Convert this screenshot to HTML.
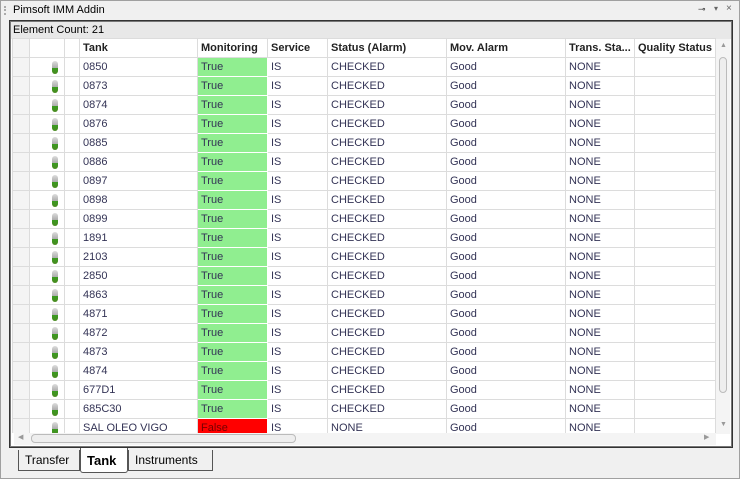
<!DOCTYPE html>
<html><head><style>
*{margin:0;padding:0;box-sizing:border-box}
body{width:740px;height:479px;background:#f0f0f0;font-family:"Liberation Sans",sans-serif;font-size:11px;position:relative;overflow:hidden;color:#000}
.win{position:absolute;left:0;top:0;width:740px;height:479px;border:1px solid #a0a0a0;background:#f0f0f0}
.title{position:absolute;left:12px;top:3px;font-size:11px}
.grip{position:absolute;left:3px;top:5px;width:2px;height:9px;border-left:2px dotted #aaa}
.frame{position:absolute;left:8px;top:19px;width:724px;height:428px;border:1px solid #333;box-shadow:inset 0 0 0 1px #777;background:#fff}
.ec{position:absolute;left:1px;top:1px;width:720px;height:17px;background:#e8e8e8;padding:2px 2px;font-size:11px}
.grid{position:absolute;left:2px;top:17px;width:704px;height:395px;overflow:hidden}
table{border-collapse:collapse;table-layout:fixed}
td,th{height:19px;border:1px solid #dcdcdc;padding:0 3px;white-space:nowrap;overflow:hidden;text-align:left;color:#333355}
th{font-weight:bold;color:#222;background:#fff}
td.rh,th.rh{background:#f4f4f4}
.g{background:#90ee90;border-color:#fff}
.r{background:#ff0000;color:#700;border-color:#fff}
.ic{display:inline-block;width:6px;height:13px;border-radius:3px;background:linear-gradient(#ddd 0,#aaa 55%,#3a9a20 55%,#4a8a20);margin-left:19px;vertical-align:middle}
.vs{position:absolute;left:706px;top:18px;width:14px;height:395px;background:#f4f4f4}
.vs .th{position:absolute;left:3px;top:18px;width:8px;height:336px;border:1px solid #bbb;border-radius:4px;background:#eee}
.hs{position:absolute;left:4px;top:412px;width:702px;height:12px;background:#f4f4f4}
.hs .th{position:absolute;left:17px;top:1px;width:265px;height:9px;border:1px solid #bbb;border-radius:4px;background:#eee}
.tab{position:absolute;top:449px;height:21px;border:1px solid #555;border-top:none;background:#f0f0f0;padding:3px 6px;font-size:12px}
</style></head><body>
<div class="win">
<div class="grip"></div><div class="title">Pimsoft IMM Addin</div>
<div style="position:absolute;left:697px;top:3px;font-size:9px;color:#333">⊸</div>
<div style="position:absolute;left:713px;top:3px;font-size:8px;color:#666">▾</div>
<div style="position:absolute;left:725px;top:2px;font-size:10px;color:#666">×</div>
<div class="frame">
<div class="ec">Element Count: 21</div>
<div class="grid"><table>
<colgroup><col style="width:17px"><col style="width:35px"><col style="width:15px"><col style="width:118px"><col style="width:70px"><col style="width:60px"><col style="width:119px"><col style="width:119px"><col style="width:69px"><col style="width:80px"></colgroup>
<tr><th class="rh"></th><th></th><th></th><th>Tank</th><th>Monitoring</th><th>Service</th><th>Status (Alarm)</th><th>Mov. Alarm</th><th>Trans. Sta...</th><th>Quality Status</th></tr>
<tr><td class="rh"></td><td><span class="ic"></span></td><td></td><td>0850</td><td class="g">True</td><td>IS</td><td>CHECKED</td><td>Good</td><td>NONE</td><td></td></tr>
<tr><td class="rh"></td><td><span class="ic"></span></td><td></td><td>0873</td><td class="g">True</td><td>IS</td><td>CHECKED</td><td>Good</td><td>NONE</td><td></td></tr>
<tr><td class="rh"></td><td><span class="ic"></span></td><td></td><td>0874</td><td class="g">True</td><td>IS</td><td>CHECKED</td><td>Good</td><td>NONE</td><td></td></tr>
<tr><td class="rh"></td><td><span class="ic"></span></td><td></td><td>0876</td><td class="g">True</td><td>IS</td><td>CHECKED</td><td>Good</td><td>NONE</td><td></td></tr>
<tr><td class="rh"></td><td><span class="ic"></span></td><td></td><td>0885</td><td class="g">True</td><td>IS</td><td>CHECKED</td><td>Good</td><td>NONE</td><td></td></tr>
<tr><td class="rh"></td><td><span class="ic"></span></td><td></td><td>0886</td><td class="g">True</td><td>IS</td><td>CHECKED</td><td>Good</td><td>NONE</td><td></td></tr>
<tr><td class="rh"></td><td><span class="ic"></span></td><td></td><td>0897</td><td class="g">True</td><td>IS</td><td>CHECKED</td><td>Good</td><td>NONE</td><td></td></tr>
<tr><td class="rh"></td><td><span class="ic"></span></td><td></td><td>0898</td><td class="g">True</td><td>IS</td><td>CHECKED</td><td>Good</td><td>NONE</td><td></td></tr>
<tr><td class="rh"></td><td><span class="ic"></span></td><td></td><td>0899</td><td class="g">True</td><td>IS</td><td>CHECKED</td><td>Good</td><td>NONE</td><td></td></tr>
<tr><td class="rh"></td><td><span class="ic"></span></td><td></td><td>1891</td><td class="g">True</td><td>IS</td><td>CHECKED</td><td>Good</td><td>NONE</td><td></td></tr>
<tr><td class="rh"></td><td><span class="ic"></span></td><td></td><td>2103</td><td class="g">True</td><td>IS</td><td>CHECKED</td><td>Good</td><td>NONE</td><td></td></tr>
<tr><td class="rh"></td><td><span class="ic"></span></td><td></td><td>2850</td><td class="g">True</td><td>IS</td><td>CHECKED</td><td>Good</td><td>NONE</td><td></td></tr>
<tr><td class="rh"></td><td><span class="ic"></span></td><td></td><td>4863</td><td class="g">True</td><td>IS</td><td>CHECKED</td><td>Good</td><td>NONE</td><td></td></tr>
<tr><td class="rh"></td><td><span class="ic"></span></td><td></td><td>4871</td><td class="g">True</td><td>IS</td><td>CHECKED</td><td>Good</td><td>NONE</td><td></td></tr>
<tr><td class="rh"></td><td><span class="ic"></span></td><td></td><td>4872</td><td class="g">True</td><td>IS</td><td>CHECKED</td><td>Good</td><td>NONE</td><td></td></tr>
<tr><td class="rh"></td><td><span class="ic"></span></td><td></td><td>4873</td><td class="g">True</td><td>IS</td><td>CHECKED</td><td>Good</td><td>NONE</td><td></td></tr>
<tr><td class="rh"></td><td><span class="ic"></span></td><td></td><td>4874</td><td class="g">True</td><td>IS</td><td>CHECKED</td><td>Good</td><td>NONE</td><td></td></tr>
<tr><td class="rh"></td><td><span class="ic"></span></td><td></td><td>677D1</td><td class="g">True</td><td>IS</td><td>CHECKED</td><td>Good</td><td>NONE</td><td></td></tr>
<tr><td class="rh"></td><td><span class="ic"></span></td><td></td><td>685C30</td><td class="g">True</td><td>IS</td><td>CHECKED</td><td>Good</td><td>NONE</td><td></td></tr>
<tr><td class="rh"></td><td><span class="ic"></span></td><td></td><td>SAL OLEO VIGO</td><td class="r">False</td><td>IS</td><td>NONE</td><td>Good</td><td>NONE</td><td></td></tr>
</table></div>
<div class="vs"><div style="position:absolute;left:4px;top:3px;font-size:7px;color:#999">▲</div><div class="th"></div><div style="position:absolute;left:4px;top:382px;font-size:7px;color:#999">▼</div></div>
<div class="hs"><div style="position:absolute;left:4px;top:0;font-size:7px;color:#999">◀</div><div class="th"></div><div style="position:absolute;left:690px;top:0;font-size:7px;color:#999">▶</div></div>
</div>
<div class="tab" style="left:17px;width:62px">Transfer</div>
<div class="tab" style="left:79px;width:48px;top:447px;height:25px;background:#fff;font-weight:bold;font-size:13px;padding-top:5px;border-radius:0 0 3px 3px">Tank</div>
<div class="tab" style="left:127px;width:85px">Instruments</div>
</div>
</body></html>
